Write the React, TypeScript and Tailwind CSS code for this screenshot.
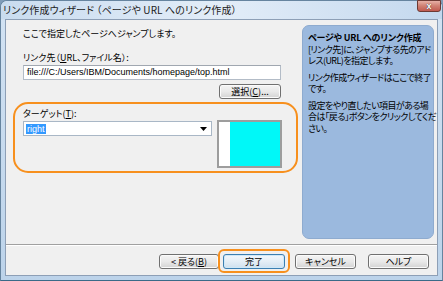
import React from "react";

const jp = "font-['Noto_Sans_CJK_JP','Noto_Sans',sans-serif] [font-feature-settings:'palt']";

function VButton({ children, def = false, w = "w-[60px]" }: { children: React.ReactNode; def?: boolean; w?: string }) {
  return (
    <div
      className={`${w} h-[15px] rounded-[3px] border flex items-center justify-center text-[9px] leading-none text-black ${
        def
          ? "border-[#3c7fb1] bg-gradient-to-b from-[#f3f8fc] via-[#e4eef6] to-[#cfe0ee] shadow-[inset_0_0_0_1px_#cfe8f8]"
          : "border-[#707070] bg-gradient-to-b from-[#f4f4f4] via-[#e9e9e9] to-[#d3d3d3] shadow-[inset_0_0_0_1px_#fbfbfb]"
      }`}
    >
      {children}
    </div>
  );
}

export default function App() {
  return (
    <div className="w-[443px] h-[281px] bg-[#7f9cb9]">
      <div
        className={`relative flex flex-col w-[443px] h-[281px] rounded-t-[7px] border border-[#66849f] border-b-[#3a6a88] bg-gradient-to-b from-[#d3e3f3] to-[#bcd3ea] text-black ${jp}`}
      >
        {/* title bar */}
        <div className="h-[18px] flex items-center pl-[2px] text-[10px] leading-none text-[#222] tracking-[0.1px] bg-gradient-to-r from-[#c9dcef] via-[#e3edf8] to-[#c3d8ee] rounded-t-[6px]">
          リンク作成ウィザード （ページや URL へのリンク作成）
        </div>
        {/* close button */}
        <div className="absolute top-[-1px] right-[1px] w-[24px] h-[12px] rounded-b-[3px] border border-[#6d3a34] bg-gradient-to-b from-[#e6b0a6] via-[#cf7f72] to-[#c05a50] flex items-center justify-center">
          <span className="text-white text-[9px] font-bold leading-none font-['Liberation_Sans',sans-serif] [text-shadow:0_0_1px_#000]">x</span>
        </div>

        {/* client */}
        <div className="flex-1 mx-[4px] mb-[4px] border border-[#8d9fb6] bg-[#f0f0f0] flex flex-col">
          <div className="h-[224px] flex">
            <div className="w-[296px] pl-[17px] flex flex-col text-[9px] leading-[12px]">
              <div className="mt-[8px]">ここで指定したページへジャンプします。</div>
              <div className="mt-[12px]">
                リンク先（<span className="underline">U</span>RL、ファイル名）:
              </div>
              <div className="mt-[1px] w-[258px] h-[15px] border border-[#b3bcc7] border-t-[#a0a7b0] bg-white flex items-center pl-[3px] text-[9px] leading-none font-['Liberation_Sans',sans-serif]">
                file:///C:/Users/IBM/Documents/homepage/top.html
              </div>
              <div className="mt-[4px] w-[258px] flex justify-end">
                <VButton w="w-[62px]">
                  選択(<span className="underline">C</span>)...
                </VButton>
              </div>
              {/* target group with orange highlight */}
              <div className="mt-[3px] ml-[-10px] w-[285px] h-[71px] rounded-[15px] border-2 border-[#f7901e] pl-[8px] pt-[4px] flex">
                <div className="flex flex-col w-[189px]">
                  <div className="h-[12px]">
                    ターゲット(<span className="underline">T</span>):
                  </div>
                  <div className="mt-[1px] h-[15px] border border-[#a9b7c6] bg-white flex items-center pl-[2px] pr-[4px]">
                    <span className="bg-[#3399ff] text-white text-[9px] leading-[10px] px-[1px] font-['Liberation_Sans',sans-serif]">
                      right
                    </span>
                    <svg className="ml-auto" width="7" height="4" viewBox="0 0 7 4">
                      <polygon points="0,0 7,0 3.5,4" fill="#000" />
                    </svg>
                  </div>
                </div>
                <div className="ml-[5px] mt-[12px] w-[65px] h-[48px] border-2 border-[#9d9d9d] flex">
                  <div className="w-[11px] bg-white" />
                  <div className="flex-1 bg-[#00f8f8]" />
                </div>
              </div>
            </div>

            {/* right info panel */}
            <div className="w-[132px] h-[214px] mt-[5px] rounded-[7px] border border-[#8eabcf] bg-[#9bb9de] pl-[5px] pt-[6px] text-[9px] leading-[11.5px] tracking-[-0.55px] text-black whitespace-nowrap">
              <div className="font-bold tracking-[-0.2px]">ページや URL へのリンク作成</div>
              <div>
                [リンク先]に、ジャンプする先のアド
                <br />
                レス(URL)を指定します。
              </div>
              <div className="mt-[5px]">
                リンク作成ウィザードはここで終了
                <br />
                です。
              </div>
              <div className="mt-[5px]">
                設定をやり直したい項目がある場
                <br />
                合は「戻る」ボタンをクリックしてくだ
                <br />
                さい。
              </div>
            </div>
          </div>

          {/* separator */}
          <div className="h-[2px] border-t border-[#a0a0a0] border-b border-b-white" />

          {/* button row */}
          <div className="flex-1 flex justify-end items-start pt-[8px] pr-[8px]">
            <VButton>
              &lt; 戻る(<span className="underline">B</span>)
            </VButton>
            <div className="relative ml-[4px]">
              <VButton def w="w-[62px]">完了</VButton>
              <div className="absolute left-[-5px] top-[-5px] right-[-5px] bottom-[-4px] rounded-[6px] border-2 border-[#f7901e]" />
            </div>
            <div className="ml-[10px]">
              <VButton w="w-[61px]">キャンセル</VButton>
            </div>
            <div className="ml-[12px]">
              <VButton w="w-[61px]">ヘルプ</VButton>
            </div>
          </div>
        </div>
      </div>
    </div>
  );
}
